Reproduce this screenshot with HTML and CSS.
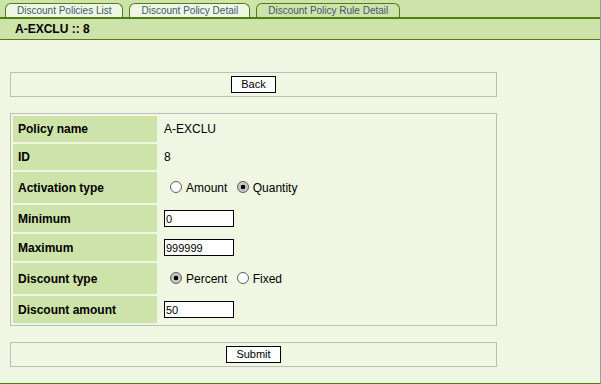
FILE: index.html
```html
<!DOCTYPE html>
<html lang="en">
<head>
    <meta charset="UTF-8">
    <title>Discount Policy Rule Detail</title>
    <link rel="stylesheet" href="styles.css">
</head>
<body>
    <div class="page">
        <div class="tabs">
            <a class="tab" href="#">Discount Policies List</a>
            <a class="tab" href="#">Discount Policy Detail</a>
            <a class="tab current" href="#">Discount Policy Rule Detail</a>
        </div>
        <div class="title">A-EXCLU :: 8</div>

        <div class="content">
            <div class="bar"><button type="button" class="btn">Back</button></div>

            <div class="panel">
                <table class="form">
                    <tr class="row-text">
                        <td class="label">Policy name</td>
                        <td class="value">A-EXCLU</td>
                    </tr>
                    <tr class="row-text">
                        <td class="label">ID</td>
                        <td class="value">8</td>
                    </tr>
                    <tr class="row-radio">
                        <td class="label">Activation type</td>
                        <td class="value">
                            <input type="radio" name="activation">Amount <input type="radio" name="activation" checked>Quantity
                        </td>
                    </tr>
                    <tr class="row-input">
                        <td class="label">Minimum</td>
                        <td class="value"><input type="text" class="field" value="0"></td>
                    </tr>
                    <tr class="row-input">
                        <td class="label">Maximum</td>
                        <td class="value"><input type="text" class="field" value="999999"></td>
                    </tr>
                    <tr class="row-radio">
                        <td class="label">Discount type</td>
                        <td class="value">
                            <input type="radio" name="dtype" checked>Percent <input type="radio" name="dtype">Fixed
                        </td>
                    </tr>
                    <tr class="row-input">
                        <td class="label">Discount amount</td>
                        <td class="value"><input type="text" class="field" value="50"></td>
                    </tr>
                </table>
            </div>

            <div class="bar"><button type="submit" class="btn">Submit</button></div>
        </div>
    </div>
</body>
</html>
```

FILE: styles.css
```css
/* page frame */
body {
    margin: 0;
    background-color: #eff6e1;
    font-family: "Liberation Sans", Arial, sans-serif;
    color: #000;
}

.page {
    height: 384px;
    box-sizing: border-box;
    border-right: 1px solid #8ea4ad;
    border-bottom: 1px solid #4f7d12;
}

/* tabs */
.tabs {
    display: flex;
    align-items: flex-end;
    gap: 6px;
    height: 17px;
    padding-left: 5px;
    background-color: #cee3a9;
    border-bottom: 2px solid #4f7d12;
}

.tab {
    height: 13px;
    padding: 0 11px;
    line-height: 13px;
    font-size: 10px;
    color: #3b5874;
    text-decoration: none;
    background-color: #eff6e1;
    border: 1px solid #4f7d12;
    border-bottom: none;
    border-radius: 6px 6px 0 0;
}

.tab.current {
    background-color: #cee3a9;
}

.title {
    height: 20px;
    padding-left: 15px;
    line-height: 20px;
    font-size: 12px;
    font-weight: bold;
    background-color: #cee3a9;
    border-bottom: 1px solid #4f7d12;
}

/* content */
.content {
    padding: 32px 0 0 10px;
}

.bar,
.panel {
    width: 487px;
    box-sizing: border-box;
    border: 1px solid #bcbcbc;
}

.bar {
    display: flex;
    justify-content: center;
    padding: 3px;
}

.panel {
    margin: 16px 0;
}

.btn {
    margin: 0;
    padding: 1px 9px;
    font-family: inherit;
    font-size: 11px;
    line-height: 13px;
    color: #000;
    background-color: #fff;
    border: 1px solid #000;
    border-radius: 0;
}

/* form table */
.form {
    width: 100%;
    border-spacing: 2px;
    font-size: 12px;
}

.form td {
    padding: 0 5px;
}

.label {
    width: 134px;
    font-weight: bold;
    background-color: #cee3a9;
}

.row-text td { height: 26px; }
.row-input td { height: 27px; }
.row-radio td { height: 31px; }

.field {
    box-sizing: border-box;
    width: 70px;
    height: 17px;
    margin: 0;
    padding: 0 1px;
    font-family: inherit;
    font-size: 11px;
    border: 1px solid #000;
    background-color: #fff;
    vertical-align: middle;
}

input[type="radio"] {
    appearance: none;
    width: 12px;
    height: 12px;
    margin: 0 4px 0 6px;
    border: 1px solid #5c5c5c;
    border-radius: 50%;
    background-color: #fff;
    vertical-align: -1px;
}

input[type="radio"]:checked {
    background: radial-gradient(circle, #000 0 2px, #c6c6c6 2.6px);
}
```
